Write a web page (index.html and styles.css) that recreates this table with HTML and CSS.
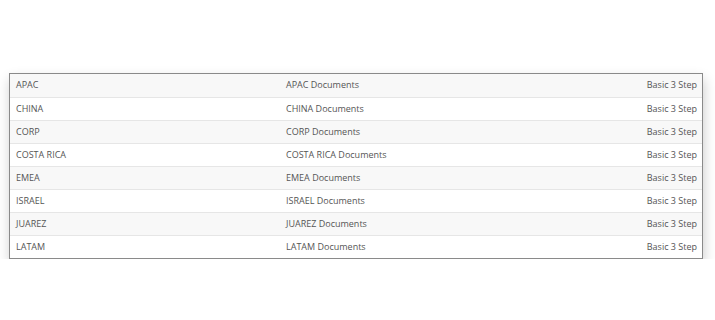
FILE: index.html
```html
<!DOCTYPE html>
<html>
<head>
<meta charset="utf-8">
<link rel="stylesheet" href="styles.css">
</head>
<body>
<div class="page">
  <div class="table">
    <div class="row"><span>APAC</span><span>APAC Documents</span><span class="right">Basic 3 Step</span></div>
    <div class="row"><span>CHINA</span><span>CHINA Documents</span><span class="right">Basic 3 Step</span></div>
    <div class="row"><span>CORP</span><span>CORP Documents</span><span class="right">Basic 3 Step</span></div>
    <div class="row"><span>COSTA RICA</span><span>COSTA RICA Documents</span><span class="right">Basic 3 Step</span></div>
    <div class="row"><span>EMEA</span><span>EMEA Documents</span><span class="right">Basic 3 Step</span></div>
    <div class="row"><span>ISRAEL</span><span>ISRAEL Documents</span><span class="right">Basic 3 Step</span></div>
    <div class="row"><span>JUAREZ</span><span>JUAREZ Documents</span><span class="right">Basic 3 Step</span></div>
    <div class="row"><span>LATAM</span><span>LATAM Documents</span><span class="right">Basic 3 Step</span></div>
  </div>
</div>
</body>
</html>
```
FILE: styles.css
```css
html, body {
  margin: 0;
  padding: 0;
  background: #ffffff;
}
body {
  font-family: "Open Sans", "Liberation Sans", sans-serif;
  font-size: 9px;
  color: #555555;
}
.page {
  padding: 73px 12px 0 9px;
}
.table {
  width: 694px;
  box-sizing: border-box;
  border: 1px solid #8a8a8a;
  box-shadow: 1px 6px 12px rgba(0, 0, 0, 0.2);
  background: #fff;
}
.row {
  box-sizing: border-box;
  display: grid;
  grid-template-columns: 270px 1fr auto;
  height: 23px;
  align-items: center;
  padding: 0 5px 2px 6px;
  border-top: 1px solid #e6e6e6;
}
.row:first-child {
  border-top: none;
}
.row:nth-child(odd) {
  background: #f8f8f8;
}
.right {
  text-align: right;
}
```
